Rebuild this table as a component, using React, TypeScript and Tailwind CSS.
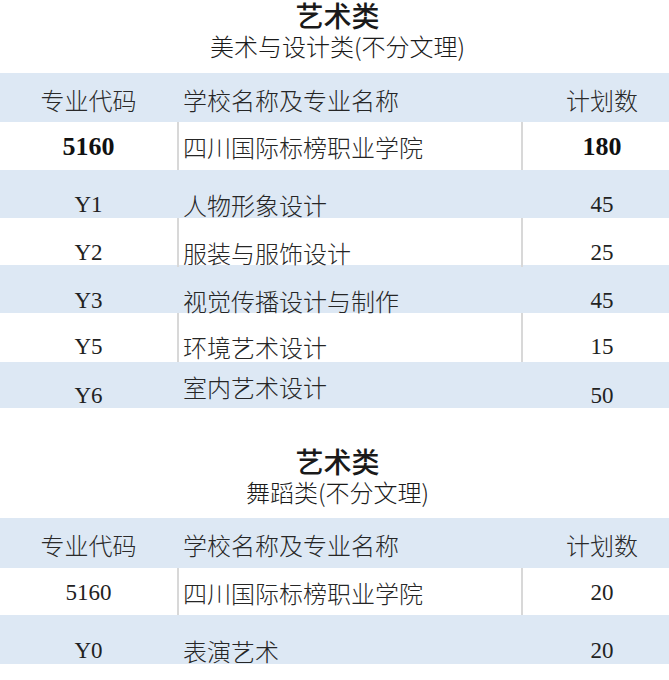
import React from 'react';

type Row = {
    code: string;
    name: string;
    plan: string;
    band: boolean;
    h: number;
    pt: number; // top padding for code / plan
    namePt?: number; // top padding for the name when it sits differently
    bold?: boolean;
    head?: boolean;
};

const cjk = "font-['Noto_Sans_CJK_SC',sans-serif]";
const serif = "font-['Liberation_Serif','Noto_Sans_CJK_SC',serif]";

const artRows: Row[] = [
    { code: '专业代码', name: '学校名称及专业名称', plan: '计划数', band: true, h: 49, pt: 13, head: true },
    { code: '5160', name: '四川国际标榜职业学院', plan: '180', band: false, h: 48, pt: 11, bold: true },
    { code: 'Y1', name: '人物形象设计', plan: '45', band: true, h: 48, pt: 21 },
    { code: 'Y2', name: '服装与服饰设计', plan: '25', band: false, h: 47, pt: 21 },
    { code: 'Y3', name: '视觉传播设计与制作', plan: '45', band: true, h: 48, pt: 22 },
    { code: 'Y5', name: '环境艺术设计', plan: '15', band: false, h: 49, pt: 20 },
    { code: 'Y6', name: '室内艺术设计', plan: '50', band: true, h: 46, pt: 20, namePt: 11 },
];

const danceRows: Row[] = [
    { code: '专业代码', name: '学校名称及专业名称', plan: '计划数', band: true, h: 50, pt: 13, head: true },
    { code: '5160', name: '四川国际标榜职业学院', plan: '20', band: false, h: 47, pt: 11 },
    { code: 'Y0', name: '表演艺术', plan: '20', band: true, h: 49, pt: 22 },
];

const TableRow: React.FC<{ row: Row }> = ({ row }) => {
    const numCls = row.head
        ? `${cjk} text-[24px] font-light text-[#2a2a2a]`
        : row.bold
          ? `${serif} text-[26px] font-bold text-[#111]`
          : `${serif} text-[23px] text-[#222]`;
    const lineCls = row.band ? 'border-transparent' : 'border-[#d8d8d8]';

    return (
        <div
            className={`grid grid-cols-[177px_344px_1fr] ${row.band ? 'bg-[#dde8f4]' : 'bg-white'}`}
            style={{ height: row.h }}
        >
            <div className={`text-center leading-[28px] ${numCls}`} style={{ paddingTop: row.pt }}>
                {row.code}
            </div>
            <div
                className={`border-l-2 ${lineCls} pl-[4px] leading-[28px] ${cjk} text-[24px] font-light text-[#262626] whitespace-nowrap`}
                style={{ paddingTop: row.namePt ?? row.pt }}
            >
                {row.name}
            </div>
            <div className={`border-l-2 ${lineCls} pl-[12px] text-center leading-[28px] ${numCls}`} style={{ paddingTop: row.pt }}>
                {row.plan}
            </div>
        </div>
    );
};

const Heading: React.FC<{ sub: string }> = ({ sub }) => (
    <div className={`flex flex-col items-center pl-[6px] ${cjk} text-[#1a1a1a]`}>
        <div className="h-[30px] text-[28px] font-medium leading-[30px]">艺术类</div>
        <div className="mt-[1px] h-[30px] text-[24px] font-light leading-[30px]">{sub}</div>
    </div>
);

export default function App() {
    return (
        <div className="w-[669px] h-[680px] overflow-hidden bg-white">
            <Heading sub="美术与设计类(不分文理)" />
            <div className="mt-[12px]">
                {artRows.map((r, i) => (
                    <TableRow key={i} row={r} />
                ))}
            </div>

            <div className="mt-[38px]">
                <Heading sub="舞蹈类(不分文理)" />
            </div>
            <div className="mt-[11px]">
                {danceRows.map((r, i) => (
                    <TableRow key={i} row={r} />
                ))}
            </div>
        </div>
    );
}
